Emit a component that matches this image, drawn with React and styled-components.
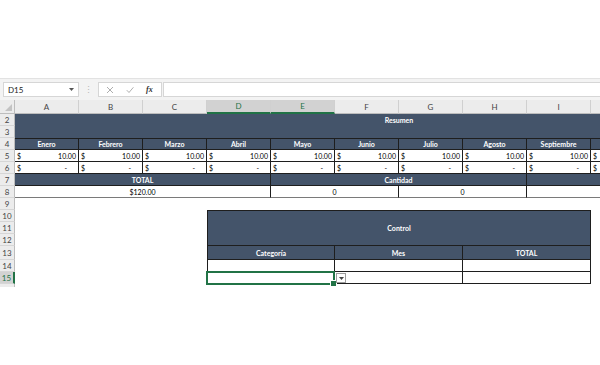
import React from 'react';
import styled, { createGlobalStyle, css } from 'styled-components';

const NAVY = '#44546a';
const GREEN = '#217346';
const INK = '#1e1e1e';

// columns A..L exist, only A..I and the left sliver of J fit in the window
const months = [
  'Enero', 'Febrero', 'Marzo', 'Abril', 'Mayo', 'Junio',
  'Julio', 'Agosto', 'Septiembre', 'Octubre', 'Noviembre', 'Diciembre',
];
const letters = ['A', 'B', 'C', 'D', 'E', 'F', 'G', 'H', 'I', 'J', 'K', 'L'];
const rowNums = [2, 3, 4, 5, 6, 7, 8, 9, 10, 11, 12, 13, 14, 15, 16];
const VISIBLE = 9;

const GlobalStyle = createGlobalStyle`
  html, body { margin: 0; padding: 0; background: #fff; }
  body { font-family: Lato, "Liberation Sans", sans-serif; color: #000; }
`;

const Page = styled.div`
  width: 600px;
  height: 365px;
  padding-top: 78px;
  box-sizing: border-box;
  overflow: hidden;
  background: #fff;
`;

const FormulaBar = styled.div`
  height: 22px;
  display: flex;
  align-items: center;
  padding-left: 3px;
  box-sizing: border-box;
  background: #f3f3f3;
  border-top: 1px solid #e2e2e2;
`;

const NameBox = styled.div`
  width: 76px;
  height: 15px;
  box-sizing: border-box;
  display: flex;
  align-items: center;
  justify-content: space-between;
  padding: 0 4px;
  background: #fff;
  border: 1px solid #d6d6d6;
  font-size: 8px;
  color: #222;
`;

const Grip = styled.div`
  width: 19px;
  display: flex;
  justify-content: center;
  color: #b8b8b8;
  font-size: 9px;
  line-height: 1;
`;

const IconBox = styled.div`
  width: 64px;
  height: 15px;
  box-sizing: border-box;
  display: flex;
  align-items: center;
  gap: 12px;
  padding-left: 7px;
  background: #fff;
  border: 1px solid #d6d6d6;
`;

const FxMark = styled.span`
  font-family: "Liberation Serif", serif;
  font-style: italic;
  font-weight: 700;
  font-size: 8px;
  color: #333;
`;

const FormulaInput = styled.div`
  flex: 1;
  height: 15px;
  margin-left: 1px;
  box-sizing: border-box;
  background: #fff;
  border: 1px solid #d6d6d6;
  border-right: none;
`;

const Sheet = styled.div`
  display: grid;
  grid-template-columns: 15px repeat(12, 64px);
  grid-template-rows: 14px repeat(11, 12px) 14px repeat(3, 12px);
  width: 600px;
  height: 187px;
  overflow: hidden;
  background: #fff;
`;

const place = css`
  grid-column: ${(p) => p.$c} / span ${(p) => p.$w || 1};
  grid-row: ${(p) => p.$r} / span ${(p) => p.$h || 1};
  box-sizing: border-box;
`;

const Corner = styled.div`
  grid-column: 1;
  grid-row: 1;
  background: #ececec;
  border-right: 1px solid #bdbdbd;
  border-bottom: 1px solid #bdbdbd;
  display: flex;
  align-items: flex-end;
  justify-content: flex-end;
  padding: 0 2px 2px 0;
  box-sizing: border-box;
`;

const ColHead = styled.div`
  grid-row: 1;
  grid-column: ${(p) => p.$c};
  box-sizing: border-box;
  display: flex;
  align-items: center;
  justify-content: center;
  font-size: 8px;
  background: ${(p) => (p.$on ? '#d2d2d2' : '#ececec')};
  color: ${(p) => (p.$on ? GREEN : '#444')};
  border-right: 1px solid #d0d0d0;
  border-bottom: ${(p) => (p.$on ? `2px solid ${GREEN}` : '1px solid #bdbdbd')};
`;

const RowHead = styled.div`
  grid-column: 1;
  grid-row: ${(p) => p.$r};
  box-sizing: border-box;
  display: flex;
  align-items: center;
  justify-content: center;
  font-size: 8px;
  overflow: hidden;
  background: ${(p) => (p.$on ? '#d2d2d2' : '#ececec')};
  color: ${(p) => (p.$on ? GREEN : '#444')};
  border-bottom: 1px solid #d6d6d6;
  border-right: ${(p) => (p.$on ? `2px solid ${GREEN}` : '1px solid #bdbdbd')};
`;

const Banner = styled.div`
  ${place};
  display: flex;
  align-items: center;
  justify-content: center;
  background: ${NAVY};
  color: #fff;
  font-size: 7px;
  font-weight: 700;
  border: ${(p) => (p.$boxed ? `1px solid ${INK}` : 'none')};
`;

const HeadCell = styled.div`
  ${place};
  display: flex;
  align-items: center;
  justify-content: center;
  white-space: nowrap;
  overflow: hidden;
  background: ${NAVY};
  color: #fff;
  font-size: 7px;
  font-weight: 700;
  border-right: 1px solid ${INK};
  border-bottom: 1px solid ${INK};
  border-left: ${(p) => (p.$left ? `1px solid ${INK}` : 'none')};
  border-top: ${(p) => (p.$top ? `1px solid ${INK}` : 'none')};
`;

const MoneyCell = styled.div`
  ${place};
  display: flex;
  align-items: center;
  justify-content: space-between;
  padding: 0 2px;
  font-size: 7px;
  background: #fff;
  border-right: 1px solid ${INK};
  border-bottom: 1px solid ${INK};
`;

const Amount = styled.span`
  padding-right: ${(p) => (p.$dash ? '9px' : '0')};
`;

const ValueCell = styled.div`
  ${place};
  display: flex;
  align-items: center;
  justify-content: center;
  font-size: 7px;
  background: #fff;
  border-right: 1px solid ${INK};
  border-bottom: 1px solid ${(p) => p.$under || INK};
  border-left: ${(p) => (p.$left ? `1px solid ${INK}` : 'none')};
`;

const Selection = styled.div`
  ${place};
  position: relative;
  z-index: 2;
  margin: -1px 0 -1px -1px;
  border: 2px solid ${GREEN};
  pointer-events: none;
`;

const FillHandle = styled.span`
  position: absolute;
  right: -4px;
  bottom: -4px;
  width: 5px;
  height: 5px;
  background: ${GREEN};
  border: 1px solid #fff;
`;

const DropButton = styled.div`
  ${place};
  z-index: 3;
  justify-self: start;
  width: 10px;
  margin: 1px 0 0 1px;
  height: 10px;
  display: flex;
  align-items: center;
  justify-content: center;
  background: #fff;
  border: 1px solid #9d9d9d;
`;

const Triangle = ({ size = 5, color = '#555' }) => (
  <svg width={size} height={size * 0.6} viewBox="0 0 10 6">
    <polygon points="0,0 10,0 5,6" fill={color} />
  </svg>
);

export default function App() {
  return (
    <Page>
      <GlobalStyle />
      <FormulaBar>
        <NameBox>
          D15
          <Triangle size={5} />
        </NameBox>
        <Grip>⋮</Grip>
        <IconBox>
          <svg width="8" height="8" viewBox="0 0 8 8">
            <path d="M1 1 L7 7 M7 1 L1 7" stroke="#a5a5a5" strokeWidth="0.9" />
          </svg>
          <svg width="8" height="8" viewBox="0 0 8 8">
            <path d="M0.8 4.2 L3 6.5 L7.4 1.3" stroke="#a5a5a5" strokeWidth="0.9" fill="none" />
          </svg>
          <FxMark>fx</FxMark>
        </IconBox>
        <FormulaInput />
      </FormulaBar>

      <Sheet>
        <Corner>
          <svg width="7" height="7" viewBox="0 0 7 7">
            <polygon points="7,0 7,7 0,7" fill="#c3c3c3" />
          </svg>
        </Corner>
        {letters.map((l, i) => (
          <ColHead key={l} $c={i + 2} $on={l === 'D' || l === 'E'}>
            {i < VISIBLE ? l : null}
          </ColHead>
        ))}
        {rowNums.map((n) => (
          <RowHead key={n} $r={n} $on={n === 15}>{n}</RowHead>
        ))}

        <Banner $c={2} $w={12} $r={2}>Resumen</Banner>
        <Banner $c={2} $w={12} $r={3} />

        {months.map((m, i) => (
          <HeadCell key={m} $c={i + 2} $r={4} $top>{i < VISIBLE ? m : null}</HeadCell>
        ))}
        {months.map((m, i) => (
          <MoneyCell key={`v${m}`} $c={i + 2} $r={5}>
            {i <= VISIBLE && <span>$</span>}
            {i < VISIBLE && <Amount>10.00</Amount>}
          </MoneyCell>
        ))}
        {months.map((m, i) => (
          <MoneyCell key={`d${m}`} $c={i + 2} $r={6}>
            {i <= VISIBLE && <span>$</span>}
            {i < VISIBLE && <Amount $dash>-</Amount>}
          </MoneyCell>
        ))}

        <HeadCell $c={2} $w={4} $r={7}>TOTAL</HeadCell>
        <HeadCell $c={6} $w={4} $r={7}>Cantidad</HeadCell>
        <HeadCell $c={10} $w={4} $r={7} />

        <ValueCell $c={2} $w={4} $r={8} $under="#7a7a7a">$120.00</ValueCell>
        <ValueCell $c={6} $w={2} $r={8} $under="#7a7a7a">0</ValueCell>
        <ValueCell $c={8} $w={2} $r={8} $under="#7a7a7a">0</ValueCell>
        <ValueCell $c={10} $w={4} $r={8} $under="#7a7a7a" />

        <Banner $c={5} $w={6} $r={10} $h={3} $boxed>Control</Banner>
        <HeadCell $c={5} $w={2} $r={13} $left>Categoría</HeadCell>
        <HeadCell $c={7} $w={2} $r={13}>Mes</HeadCell>
        <HeadCell $c={9} $w={2} $r={13}>TOTAL</HeadCell>

        {[14, 15].map((r) => (
          <React.Fragment key={r}>
            <ValueCell $c={5} $w={2} $r={r} $left />
            <ValueCell $c={7} $w={2} $r={r} />
            <ValueCell $c={9} $w={2} $r={r} />
          </React.Fragment>
        ))}

        <Selection $c={5} $w={2} $r={15}>
          <FillHandle />
        </Selection>
        <DropButton $c={7} $r={15}>
          <Triangle size={5} color="#444" />
        </DropButton>
      </Sheet>
    </Page>
  );
}
